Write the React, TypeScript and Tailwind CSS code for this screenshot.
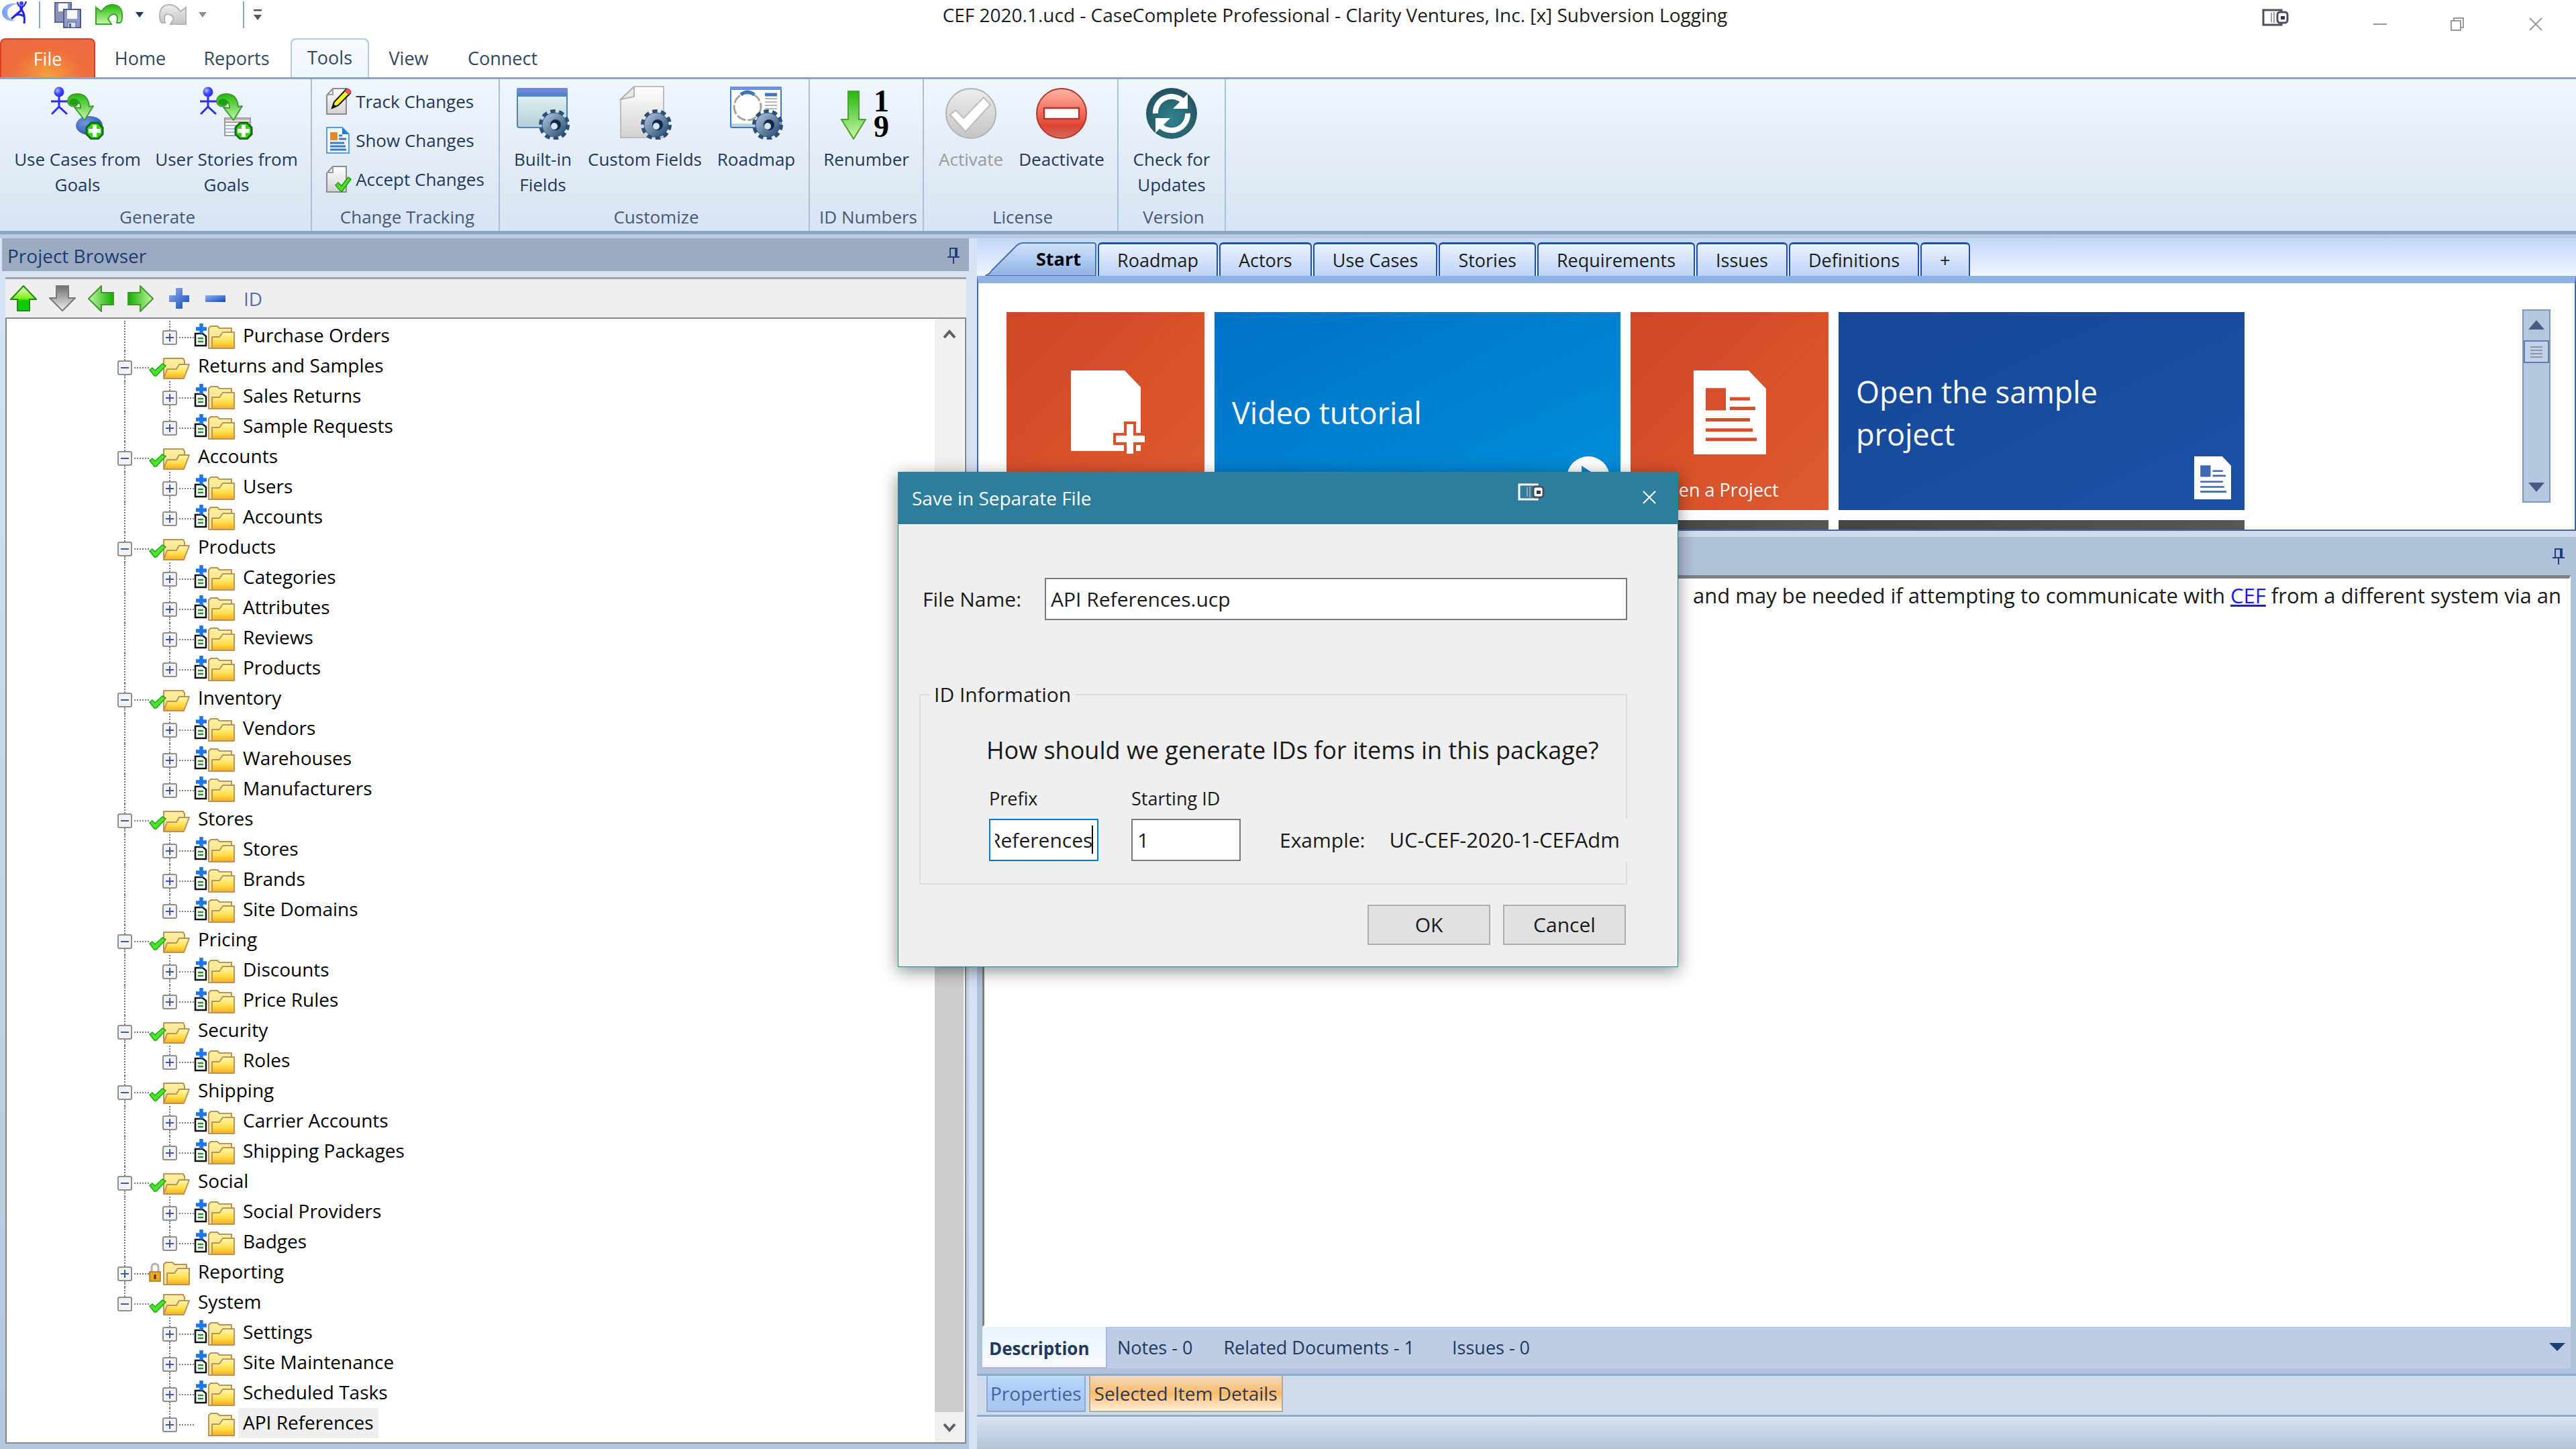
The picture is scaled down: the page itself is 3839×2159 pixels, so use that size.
import React, { useEffect, useRef, useState } from 'react';

type Status = 'doc' | 'check' | 'lock' | 'none';

interface TreeNode {
  label: string;
  level: 1 | 2;
  status: Status;
  open?: boolean;
  selected?: boolean;
}

const branch = (label: string, children: string[]): TreeNode[] => [
  { label, level: 1, status: 'check', open: true },
  ...children.map((child): TreeNode => ({ label: child, level: 2, status: 'doc' })),
];

const treeNodes: TreeNode[] = [
  { label: 'Purchase Orders', level: 2, status: 'doc' },
  ...branch('Returns and Samples', ['Sales Returns', 'Sample Requests']),
  ...branch('Accounts', ['Users', 'Accounts']),
  ...branch('Products', ['Categories', 'Attributes', 'Reviews', 'Products']),
  ...branch('Inventory', ['Vendors', 'Warehouses', 'Manufacturers']),
  ...branch('Stores', ['Stores', 'Brands', 'Site Domains']),
  ...branch('Pricing', ['Discounts', 'Price Rules']),
  ...branch('Security', ['Roles']),
  ...branch('Shipping', ['Carrier Accounts', 'Shipping Packages']),
  ...branch('Social', ['Social Providers', 'Badges']),
  { label: 'Reporting', level: 1, status: 'lock' },
  ...branch('System', ['Settings', 'Site Maintenance', 'Scheduled Tasks']),
  { label: 'API References', level: 2, status: 'none', selected: true },
];

const lastRoot = treeNodes.map((n) => n.level).lastIndexOf(1);

// Gradients shared by all of the icons
const IconDefs = () => (
  <svg width="0" height="0" className="absolute" aria-hidden="true">
    <defs>
      <linearGradient id="green" x1="0" y1="0" x2="0" y2="1">
        <stop offset="0" stopColor="#23b80d" />
        <stop offset="1" stopColor="#c9f7a9" />
      </linearGradient>
      <linearGradient id="greenUp" x1="0" y1="0" x2="0" y2="1">
        <stop offset="0" stopColor="#e6ffc8" />
        <stop offset="0.5" stopColor="#84ec1c" />
        <stop offset="0.6" stopColor="#10c800" />
        <stop offset="1" stopColor="#08d010" />
      </linearGradient>
      <linearGradient id="greenLeft" x1="0" y1="0" x2="1" y2="0">
        <stop offset="0" stopColor="#c5f7a0" />
        <stop offset="1" stopColor="#0eb000" />
      </linearGradient>
      <linearGradient id="greenRight" x1="1" y1="0" x2="0" y2="0">
        <stop offset="0" stopColor="#c5f7a0" />
        <stop offset="1" stopColor="#0eb000" />
      </linearGradient>
      <linearGradient id="grey" x1="0" y1="0" x2="0" y2="1">
        <stop offset="0" stopColor="#6e6e6e" />
        <stop offset="1" stopColor="#efefef" />
      </linearGradient>
      <linearGradient id="page" x1="0" y1="0" x2="0" y2="1">
        <stop offset="0" stopColor="#ffffff" />
        <stop offset="1" stopColor="#d2d2d2" />
      </linearGradient>
      <linearGradient id="folder" x1="0" y1="0" x2="0" y2="1">
        <stop offset="0" stopColor="#fff9b4" />
        <stop offset="0.6" stopColor="#ffdb45" />
        <stop offset="1" stopColor="#fbab22" />
      </linearGradient>
      <linearGradient id="folderBack" x1="0" y1="0" x2="0" y2="1">
        <stop offset="0" stopColor="#fdf0a0" />
        <stop offset="1" stopColor="#f5dc84" />
      </linearGradient>
      <linearGradient id="blue" x1="0" y1="0" x2="1" y2="1">
        <stop offset="0" stopColor="#8fb2ec" />
        <stop offset="1" stopColor="#1649bd" />
      </linearGradient>
      <linearGradient id="window" x1="0" y1="0" x2="0" y2="1">
        <stop offset="0" stopColor="#e9f8f8" />
        <stop offset="1" stopColor="#b4ced5" />
      </linearGradient>
      <linearGradient id="red" x1="0" y1="0" x2="0" y2="1">
        <stop offset="0" stopColor="#ffb4a8" />
        <stop offset="0.5" stopColor="#f06a58" />
        <stop offset="0.75" stopColor="#de4532" />
        <stop offset="1" stopColor="#cf6a5e" />
      </linearGradient>
      <linearGradient id="disc" x1="0" y1="0" x2="0" y2="1">
        <stop offset="0" stopColor="#ededed" />
        <stop offset="1" stopColor="#c4c4c4" />
      </linearGradient>
      <linearGradient id="swoosh" x1="0" y1="0" x2="1" y2="0">
        <stop offset="0" stopColor="#6f9df2" />
        <stop offset="1" stopColor="#b4cdfa" />
      </linearGradient>
      <radialGradient id="teal" cx="0.5" cy="0.6" r="0.6">
        <stop offset="0" stopColor="#2f8490" />
        <stop offset="1" stopColor="#24505f" />
      </radialGradient>
      <radialGradient id="ball" cx="0.35" cy="0.35" r="0.75">
        <stop offset="0" stopColor="#7396e0" />
        <stop offset="1" stopColor="#2450b8" />
      </radialGradient>
      <radialGradient id="head" cx="0.35" cy="0.35" r="0.75">
        <stop offset="0" stopColor="#b0b8ff" />
        <stop offset="0.5" stopColor="#3b44ff" />
        <stop offset="1" stopColor="#2a2df5" />
      </radialGradient>
      <linearGradient id="gear" x1="0" y1="0" x2="1" y2="1">
        <stop offset="0" stopColor="#b5cbe2" />
        <stop offset="1" stopColor="#23456e" />
      </linearGradient>
      <linearGradient id="startTab" x1="0" y1="0" x2="0" y2="1">
        <stop offset="0" stopColor="#d2e3f8" />
        <stop offset="1" stopColor="#8fb2e6" />
      </linearGradient>
    </defs>
  </svg>
);

const Gear = () => (
  <g>
    <circle cx="57" cy="58" r="19" fill="none" stroke="#2c4f79" strokeWidth="8" strokeDasharray="7 4.94" />
    <circle cx="57" cy="58" r="18" fill="url(#gear)" stroke="#2f527c" strokeWidth="1" />
    <circle cx="59" cy="58" r="8" fill="#10294a" />
    <circle cx="57" cy="60" r="5" fill="#d5e2f0" />
  </g>
);

const Figure = () => (
  <g stroke="#2a2df5" strokeWidth="3" fill="none">
    <path d="M12 16v15M0 23h25M12 31L1 42M12 31l12 11" />
    <circle cx="12" cy="9" r="7.500" fill="url(#head)" stroke="none" />
  </g>
);

const CurvedArrow = () => (
  <g strokeLinejoin="round">
    <path
      d="M25 24C25 15 32 12 39 12C50 12 56 19 57 31L63 30L50 51L35 32L44 33C44 27 43 25 41 24C40 32 27 33 25 24Z"
      fill="url(#green)" stroke="#3f9a33" strokeWidth="2"
    />
    <ellipse cx="34" cy="24" rx="7" ry="5" fill="#1f9f12" />
  </g>
);

const AddBadge = () => (
  <g>
    <path d="M60 55h10l7 7v10l-7 7H60l-7-7V62z" fill="#35d60c" stroke="#0c6c1a" strokeWidth="3" />
    <path d="M65 58v18M56 67h18" stroke="#fff" strokeWidth="6" />
  </g>
);

const BigIcon = ({ children }: { children: React.ReactNode }) => (
  <svg viewBox="0 0 80 80" className="size-20 shrink-0" aria-hidden="true">{children}</svg>
);

const UseCasesIcon = () => (
  <BigIcon>
    <ellipse cx="57" cy="59" rx="20" ry="14" fill="url(#ball)" />
    <Figure /><CurvedArrow /><AddBadge />
  </BigIcon>
);

const StoriesIcon = () => (
  <BigIcon>
    <rect x="37" y="48" width="38" height="26" fill="#fff" stroke="#9c9c9c" strokeWidth="2" />
    <path d="M38 50h36" stroke="#bbb" strokeWidth="3" />
    <path d="M38 54h36" stroke="#b5635c" strokeWidth="1.500" />
    <path d="M38 59h30M38 64h30M38 69h30" stroke="#7ea2e0" strokeWidth="1.500" />
    <Figure /><CurvedArrow /><AddBadge />
  </BigIcon>
);

const BuiltInIcon = () => (
  <BigIcon>
    <rect x="2" y="4" width="74" height="58" rx="3" fill="url(#window)" stroke="#4f84ae" strokeWidth="2" />
    <path d="M1 16V6q0-3 3-3h70q3 0 3 3v10z" fill="#4f86c4" />
    <path d="M1 10V6q0-3 3-3h70q3 0 3 3v4z" fill="#6b85e0" />
    <Gear />
  </BigIcon>
);

const CustomFieldsIcon = () => (
  <BigIcon>
    <path d="M24 1h44v76H4V20z" fill="url(#page)" stroke="#bcbcbc" strokeWidth="2" />
    <path d="M24 1v15L4 20z" fill="#e8e8e8" stroke="#b5b5b5" strokeWidth="2" />
    <Gear />
  </BigIcon>
);

const RoadmapIcon = () => (
  <BigIcon>
    <rect x="2" y="2" width="75" height="60" rx="2" fill="#fff" stroke="#4379bd" strokeWidth="2" />
    <path d="M1 1h77v5H1z" fill="#6d8fe4" />
    <path d="M3 56h73v5H3z" fill="#bdd4dc" />
    <circle cx="27" cy="31" r="20" fill="none" stroke="#a5a5a5" strokeWidth="3" strokeDasharray="14 3" />
    <path d="M17 13q10-8 20 0" fill="none" stroke="#3f74ac" strokeWidth="5" />
    <path d="M53 13h18" stroke="#4178b4" strokeWidth="5" />
    <path d="M53 19h18M53 24h18M53 29h18M53 34h18" stroke="#b9b9b9" strokeWidth="2" />
    <Gear />
  </BigIcon>
);

const RenumberIcon = () => (
  <span className="flex h-20 w-20 items-start justify-between">
    <svg viewBox="0 0 40 80" className="h-20 w-10" aria-hidden="true">
      <path d="M13 8h16v42h10L21 79L3 50h10z" fill="url(#green)" stroke="#4e9f2c" strokeWidth="2" />
    </svg>
    <span className="flex flex-col pt-1 pr-[6px] font-['Liberation_Serif',serif] text-[46px] leading-[38px] font-bold text-black">
      <span>1</span>
      <span>9</span>
    </span>
  </span>
);

const ActivateIcon = () => (
  <BigIcon>
    <circle cx="40" cy="41" r="37" fill="url(#disc)" stroke="#b4b4b4" strokeWidth="2" />
    <path d="M9 43l8-7l12 12L59 17l10 11L32 68z" fill="#fff" stroke="#bcbcbc" strokeWidth="2" />
  </BigIcon>
);

const DeactivateIcon = () => (
  <BigIcon>
    <circle cx="40" cy="41" r="37" fill="url(#red)" stroke="#b0392c" strokeWidth="2" />
    <rect x="14" y="33" width="52" height="16" fill="#fff" stroke="#a93a30" strokeWidth="2.500" />
  </BigIcon>
);

const UpdatesIcon = () => (
  <BigIcon>
    <circle cx="40" cy="41" r="38" fill="url(#teal)" />
    <path d="M16 41A24 24 0 0 1 56 22" fill="none" stroke="#fff" strokeWidth="8" />
    <path d="M64 12v22H42z" fill="#fff" />
    <path d="M64 41A24 24 0 0 1 24 60" fill="none" stroke="#fff" strokeWidth="8" />
    <path d="M16 70V48h22z" fill="#fff" />
  </BigIcon>
);

const SmallPage = ({ children }: { children: React.ReactNode }) => (
  <svg viewBox="0 0 38 42" className="h-[42px] w-[38px] shrink-0" aria-hidden="true">
    <path d="M10 2h20v38H1V12z" fill="url(#page)" stroke="#8b8b8b" strokeWidth="2" />
    <path d="M10 2v9H1" fill="none" stroke="#9b9b9b" strokeWidth="2" />
    {children}
  </svg>
);

const TrackIcon = () => (
  <SmallPage>
    <path d="M12 22L30 3l6 6L18 27l-9 4z" fill="#fff21f" stroke="#111" strokeWidth="2" />
    <path d="M28 5l3-3q6 1 6 6l-3 3z" fill="#e85d6b" stroke="#8e1c2a" />
    <path d="M8 32l3-7l5 4z" fill="#111" />
  </SmallPage>
);

const ShowIcon = () => (
  <svg viewBox="0 0 38 42" className="h-[42px] w-[38px] shrink-0" aria-hidden="true">
    <path d="M1 2h23l10 10v28H1z" fill="#f2f8ff" stroke="#4f9bf0" strokeWidth="2" />
    <path d="M24 2l10 10H24z" fill="#1e7be6" />
    <rect x="6" y="9" width="11" height="12" fill="#e08a2c" />
    <path d="M19 14h5M19 19h11M6 25h21M6 30h23M6 35h24" stroke="#3c78bf" strokeWidth="3" />
  </svg>
);

const AcceptIcon = () => (
  <SmallPage>
    <path d="M14 30l4-4l5 5l10-13l4 3l-14 19z" fill="#4fe02c" stroke="#1f9a14" strokeWidth="1.500" />
  </SmallPage>
);

interface RibbonButtonProps {
  icon: React.ReactNode;
  lines: string[];
  className: string;
  disabled?: boolean;
}

const RibbonButton = ({ icon, lines, className, disabled }: RibbonButtonProps) => (
  <button
    disabled={disabled}
    className={`flex flex-col items-center gap-[10px] leading-[38px] whitespace-nowrap ${disabled ? 'text-[#9a9a9a]' : ''} ${className}`}
  >
    {icon}
    <span>
      {lines.map((line) => <span key={line} className="block">{line}</span>)}
    </span>
  </button>
);

const RibbonGroup = ({ title, className, children }: { title: string; className: string; children: React.ReactNode }) => (
  <section className={`flex flex-col justify-between border-r-2 border-[#a9bfda] pt-[10px] pb-[2px] ${className}`}>
    <div className="flex justify-center">{children}</div>
    <h2 className="pl-[6px] text-center leading-[38px] whitespace-nowrap text-[#47597a]">{title}</h2>
  </section>
);

const Ribbon = () => (
  <div className="flex h-[234px] items-stretch border-t-[3px] border-b-[5px] border-t-[#8ba5c4] border-b-[#8ba5c4] bg-linear-to-b from-[#eff6fe] via-[#e4ecf7] to-[#d7e4f2] text-[26px] text-[#1e395b]">
    <RibbonGroup title="Generate" className="w-[465px]">
      <div className="flex pr-[10px]">
        <RibbonButton className="w-[222px]" icon={<UseCasesIcon />} lines={['Use Cases from', 'Goals']} />
        <RibbonButton className="w-[222px]" icon={<StoriesIcon />} lines={['User Stories from', 'Goals']} />
      </div>
    </RibbonGroup>
    <RibbonGroup title="Change Tracking" className="w-[280px]">
      <div className="flex flex-col gap-4 pt-[2px]">
        {[
          { label: 'Track Changes', icon: <TrackIcon /> },
          { label: 'Show Changes', icon: <ShowIcon /> },
          { label: 'Accept Changes', icon: <AcceptIcon /> },
        ].map((item) => (
          <button key={item.label} className="flex h-[42px] items-center gap-[6px] whitespace-nowrap">
            {item.icon}
            {item.label}
          </button>
        ))}
      </div>
    </RibbonGroup>
    <RibbonGroup title="Customize" className="w-[462px]">
      <RibbonButton className="w-[108px]" icon={<BuiltInIcon />} lines={['Built-in', 'Fields']} />
      <RibbonButton className="w-[196px]" icon={<CustomFieldsIcon />} lines={['Custom Fields']} />
      <RibbonButton className="w-[136px]" icon={<RoadmapIcon />} lines={['Roadmap']} />
    </RibbonGroup>
    <RibbonGroup title="ID Numbers" className="w-[170px]">
      <RibbonButton className="w-[150px]" icon={<RenumberIcon />} lines={['Renumber']} />
    </RibbonGroup>
    <RibbonGroup title="License" className="w-[290px]">
      <RibbonButton className="w-[122px]" icon={<ActivateIcon />} lines={['Activate']} disabled />
      <RibbonButton className="w-[148px]" icon={<DeactivateIcon />} lines={['Deactivate']} />
    </RibbonGroup>
    <RibbonGroup title="Version" className="w-[160px]">
      <RibbonButton className="w-[140px]" icon={<UpdatesIcon />} lines={['Check for', 'Updates']} />
    </RibbonGroup>
  </div>
);

const CaptureIcon = ({ className }: { className: string }) => (
  <svg viewBox="0 0 40 28" className={`h-7 w-10 ${className}`} aria-hidden="true">
    <rect x="2" y="3" width="27" height="22" fill="none" stroke="currentColor" strokeWidth="3" />
    <path d="M14 7v14M18 6v16" stroke="#9aa0ac" strokeWidth="2" />
    <rect x="23" y="6" width="15" height="16" rx="4" fill="#fff" stroke="#4a4f63" strokeWidth="3" />
    <rect x="28" y="12" width="6" height="5" fill="#30364c" />
  </svg>
);

const undoPath = 'M1 5L9 11Q17 0 27 1Q41 3 40 19Q40 26 37 28H32Q35 17 29 15Q22 15 19 22L24 30H1z';

const TitleBar = () => (
  <header className="grid h-[57px] grid-cols-[1fr_auto_1fr] items-start">
    <div className="flex h-11 items-center">
      <svg viewBox="0 0 42 40" className="ml-[2px] h-10 w-[42px]" aria-hidden="true">
        <path d="M25 3C10 1 1 8 1 17C2 26 11 31 21 29C13 27 8 22 9 15C10 9 16 6 25 3Z" fill="url(#swoosh)" />
        <circle cx="30" cy="3" r="3" fill="#3b3bff" />
        <path d="M24 1q1 7 6 7q5 0 7-8" fill="none" stroke="#3434f4" strokeWidth="2.500" />
        <path d="M27 7h6l-2 8h-3z" fill="#2424f0" />
        <path d="M30 12q6 8 4 21M30 13L15 26M20 21q8-3 13 1" fill="none" stroke="#2424f0" strokeWidth="3" />
      </svg>
      <span className="ml-[14px] h-10 w-[2px] bg-[#8aa7c8]" />
      <button aria-label="Save all" className="ml-5">
        <svg viewBox="0 0 42 42" className="size-[42px]">
          <rect x="2" y="3" width="24" height="29" fill="#8793bd" stroke="#5a6796" strokeWidth="2" />
          <rect x="7" y="4" width="14" height="12" fill="#fff" />
          <rect x="15" y="13" width="25" height="27" fill="#8f9bc6" stroke="#4f5c8c" strokeWidth="2" />
          <rect x="20" y="14" width="15" height="13" fill="#f6f8ff" />
          <rect x="21" y="32" width="12" height="8" fill="#dde2f2" stroke="#4f5c8c" />
          <rect x="23" y="34" width="3" height="6" fill="#4f5c8c" />
        </svg>
      </button>
      <button aria-label="Undo" className="ml-5">
        <svg viewBox="0 0 42 32" className="h-8 w-[42px]">
          <path d={undoPath} fill="url(#green)" stroke="#3aa52c" strokeWidth="2" />
        </svg>
      </button>
      <svg viewBox="0 0 12 8" className="ml-[18px] h-2 w-3" aria-hidden="true"><path d="M0 0h12L6 8z" fill="#1e395b" /></svg>
      <button aria-label="Redo" disabled className="ml-[22px]">
        <svg viewBox="0 0 42 32" className="h-8 w-[42px]">
          <g transform="matrix(-1 0 0 1 42 0)">
            <path d={undoPath} fill="url(#disc)" stroke="#b5b5b5" strokeWidth="2" />
          </g>
        </svg>
      </button>
      <svg viewBox="0 0 12 8" className="ml-[18px] h-2 w-3" aria-hidden="true"><path d="M0 0h12L6 8z" fill="#8f8f8f" /></svg>
      <span className="ml-[54px] h-10 w-[2px] bg-[#8aa7c8]" />
      <svg viewBox="0 0 12 16" className="ml-[14px] h-4 w-3" aria-hidden="true">
        <path d="M0 1h12" stroke="#555" strokeWidth="3" /><path d="M0 8h12l-6 8z" fill="#555" />
      </svg>
    </div>
    <h1 className="pl-[140px] text-[28px] leading-[44px] whitespace-nowrap text-[#1d1d1d]">
      CEF 2020.1.ucd - CaseComplete Professional - Clarity Ventures, Inc. [x] Subversion Logging
    </h1>
    <div className="flex items-start justify-end pr-[50px] text-[#999]">
      <CaptureIcon className="mt-3 mr-[126px] text-[#4a4f63]" />
      <button aria-label="Minimize" className="mt-[26px] mr-[95px]">
        <svg viewBox="0 0 20 20" className="size-5"><path d="M0 10h20" stroke="currentColor" strokeWidth="2" /></svg>
      </button>
      <button aria-label="Restore" className="mt-[26px] mr-[97px]">
        <svg viewBox="0 0 20 20" className="size-5" fill="none" stroke="currentColor" strokeWidth="2">
          <path d="M1 5h14v14H1zM5 5V1h14v14h-4" />
        </svg>
      </button>
      <button aria-label="Close" className="mt-[26px]">
        <svg viewBox="0 0 20 20" className="size-5"><path d="M1 1l18 18M19 1L1 19" stroke="currentColor" strokeWidth="2" /></svg>
      </button>
    </div>
  </header>
);

const ribbonTab = 'flex h-full items-center justify-center pt-[2px]';

const RibbonTabs = () => (
  <nav className="flex h-[58px] items-stretch text-[27px] text-[#34475f]">
    <button className={`${ribbonTab} w-[142px] rounded-t-lg border-2 border-b-0 border-[#d8431f] bg-[radial-gradient(ellipse_at_bottom,#f6a03c_0%,#ee6d3c_55%,#ee6a48_100%)] text-white`}>File</button>
    <button className={`${ribbonTab} w-[134px]`}>Home</button>
    <button className={`${ribbonTab} w-[153px]`}>Reports</button>
    <button className={`${ribbonTab} relative -mb-[3px] ml-1 h-[61px] w-[117px] rounded-t-lg border-2 border-b-0 border-[#b6cbe3] bg-linear-to-b from-[#f6faff] to-[#eff6fe] pb-[3px]`}>Tools</button>
    <button className={`${ribbonTab} w-[118px]`}>View</button>
    <button className={`${ribbonTab} w-[162px]`}>Connect</button>
  </nav>
);

const ExpandBox = ({ open }: { open?: boolean }) => (
  <svg viewBox="0 0 22 22" className="size-[22px] shrink-0" aria-hidden="true">
    <rect x="1" y="1" width="20" height="20" rx="2" fill="#f2f2f2" stroke="#8f8f8f" strokeWidth="2" />
    <path d={open ? 'M5 11h12' : 'M5 11h12M11 5v12'} stroke="#3c57a8" strokeWidth="2" />
  </svg>
);

// Status mark and folder, drawn together because they overlap
const NodeIcon = ({ status, open }: { status: Status; open?: boolean }) => (
  <svg viewBox="0 0 62 45" className="h-[45px] w-[62px] shrink-0" aria-hidden="true">
    {open ? (
      <g stroke="#b8935a" strokeWidth="2" strokeLinejoin="round">
        <path d="M22 41V11h29l2 4v12L46 41z" fill="url(#folderBack)" />
        <path d="M22 41L27 27h14l4-7h15l-8 21z" fill="url(#folder)" />
      </g>
    ) : (
      <g stroke="#b8935a" strokeWidth="2" strokeLinejoin="round">
        <path d="M22 41V11l3-3h10l3 3h18v30z" fill="url(#folderBack)" />
        <path d="M27 41V24h11l5-7h17v24z" fill="url(#folder)" />
      </g>
    )}
    {status === 'check' && <path d="M1 28l4-3l4 4l11-10l5 3L11 37H8z" fill="#4be629" stroke="#22a512" strokeWidth="1.500" />}
    {status === 'lock' && (
      <g>
        <path d="M4 24v-8q0-6 5-6t5 6v8" fill="none" stroke="#b2b2b2" strokeWidth="3" />
        <rect x="1" y="22" width="16" height="14" fill="#eda91e" stroke="#9d7420" strokeWidth="1.500" />
        <path d="M9 26v7" stroke="#4b3208" strokeWidth="3" />
      </g>
    )}
    {status === 'doc' && (
      <g>
        <path d="M8 19h5l5 4v14H2V19z" fill="#fff" stroke="#111" strokeWidth="2.500" />
        <path d="M6 26h8M6 31h8" stroke="#249324" strokeWidth="2.500" />
        <path d="M11 4v15M3 12h16" stroke="#1f75ee" strokeWidth="5.500" />
      </g>
    )}
  </svg>
);

const VLine = ({ className }: { className: string }) => (
  <span className={`w-0 border-l-2 border-dotted border-[#7c7c7c] ${className}`} />
);

const TreeRow = ({ node, index }: { node: TreeNode; index: number }) => {
  const next = treeNodes[index + 1];
  const endsTrunk = !next || index === lastRoot || (node.level === 2 && next.level === 1);
  return (
    <li className="flex h-[45px] items-stretch">
      {node.level === 2 && (
        <span className="mr-[45px] flex w-[22px] justify-center">
          {index < lastRoot && <VLine className="h-full" />}
        </span>
      )}
      <button aria-label={`Toggle ${node.label}`} className="flex w-[22px] flex-col items-center">
        <VLine className="h-[14px]" />
        <ExpandBox open={node.open} />
        {endsTrunk ? <span className="h-[9px]" /> : <VLine className="h-[9px]" />}
      </button>
      <span className="mt-6 ml-[3px] h-0 w-[22px] border-t-2 border-dotted border-[#7c7c7c]" />
      <NodeIcon status={node.status} open={node.open} />
      <span className={`ml-1 px-[7px] leading-[43px] whitespace-nowrap ${node.selected ? 'bg-[#efefef]' : ''}`}>{node.label}</span>
    </li>
  );
};

const PinIcon = () => (
  <svg viewBox="0 0 18 26" className="h-[26px] w-[18px]" fill="none" stroke="#1f3f80" strokeWidth="2" aria-hidden="true">
    <path d="M4 14V2h10v12M12 2v12M0 15h18M9 15v10" />
  </svg>
);

const ProjectBrowser = () => (
  <aside className="flex min-w-0 flex-col bg-linear-to-b from-[#d6e5f5] to-[#b4c6dc] pb-2">
    <div className="ml-[3px] flex h-[49px] items-center justify-between bg-[#9bacc2] pt-[2px] pr-[14px] pl-2 text-[28px] text-[#1f3b70]">
      <h2>Project Browser</h2>
      <button aria-label="Pin project browser"><PinIcon /></button>
    </div>
    <div className="mt-[9px] mr-1 ml-2 flex h-[60px] items-center gap-[18px] border-t-[3px] border-[#a3a3a3] bg-[#efefef] pl-[7px]">
      <button aria-label="Move up">
        <svg viewBox="0 0 40 40" className="size-10"><path d="M20 1l19 20H29v17H11V21H1z" fill="url(#greenUp)" stroke="#1f8a10" strokeWidth="2" /></svg>
      </button>
      <button aria-label="Move down">
        <svg viewBox="0 0 40 40" className="size-10"><path d="M20 38L1 19h10V1h18v18h10z" fill="url(#grey)" stroke="#7a7a7a" strokeWidth="2" /></svg>
      </button>
      <button aria-label="Promote">
        <svg viewBox="0 0 40 40" className="size-10"><path d="M1 20L20 1v10h18v18H20v10z" fill="url(#greenLeft)" stroke="#469433" strokeWidth="2" /></svg>
      </button>
      <button aria-label="Demote">
        <svg viewBox="0 0 40 40" className="size-10"><path d="M39 20L20 1v10H2v18h18v10z" fill="url(#greenRight)" stroke="#469433" strokeWidth="2" /></svg>
      </button>
      <button aria-label="Add" className="ml-1">
        <svg viewBox="0 0 32 32" className="size-8"><path d="M11 0h10v11h10v10H21v10H11V21H1V11h10z" fill="url(#blue)" /></svg>
      </button>
      <button aria-label="Remove" className="ml-1">
        <svg viewBox="0 0 32 32" className="size-8"><path d="M1 11h30v10H1z" fill="url(#blue)" /></svg>
      </button>
      <button className="ml-2 text-[28px] text-[#4f6fb8]">ID</button>
    </div>
    <div className="mr-[4px] ml-2 flex flex-1 justify-between border-2 border-[#828790] bg-white pr-[2px]">
      <ul className="pt-[3px] pl-[165px] text-[28px] text-black">
        {treeNodes.map((node, i) => <TreeRow key={i} node={node} index={i} />)}
      </ul>
      <div className="flex w-[43px] flex-col items-center bg-[#f0f0f0]">
        <button aria-label="Scroll up" className="flex h-[45px] items-center">
          <svg viewBox="0 0 20 14" className="h-[14px] w-5"><path d="M2 12l8-9l8 9" fill="none" stroke="#606060" strokeWidth="4" /></svg>
        </button>
        <div className="w-full flex-1" />
        <div className="w-full flex-[2] bg-[#cdcdcd]" />
        <button aria-label="Scroll down" className="flex h-[45px] items-center">
          <svg viewBox="0 0 20 14" className="h-[14px] w-5"><path d="M2 2l8 9l8-9" fill="none" stroke="#606060" strokeWidth="4" /></svg>
        </button>
      </div>
    </div>
  </aside>
);

const documentTabs = ['Roadmap', 'Actors', 'Use Cases', 'Stories', 'Requirements', 'Issues', 'Definitions', '+'];

const DocumentTabs = () => (
  <nav className="flex h-14 items-end gap-[2px] bg-linear-to-b from-[#c2d7f8] to-[#f0f6fe] pl-3 text-[27px] text-[#1c1c1c]">
    <button className="relative h-[50px] w-[166px] pl-[76px] text-left font-bold text-black">
      <svg viewBox="0 0 166 50" preserveAspectRatio="none" className="absolute inset-0 size-full" aria-hidden="true">
        <path d="M0 50Q6 48 10 42L44 8Q50 1 56 1H162q3 0 3 4V50z" fill="url(#startTab)" stroke="#4a70ae" strokeWidth="2" />
      </svg>
      <span className="relative">Start</span>
    </button>
    {documentTabs.map((tab) => (
      <button key={tab} className="h-[50px] rounded-t-md border-2 border-t-[3px] border-b-0 border-[#1f4fae] bg-linear-to-b from-[#eaf2fd] to-[#bdd3f6] px-[27px] pt-px whitespace-nowrap">
        {tab}
      </button>
    ))}
  </nav>
);

const SheetIcon = ({ className }: { className: string }) => (
  <svg viewBox="0 0 108 124" preserveAspectRatio="none" className={className} aria-hidden="true">
    <path d="M0 0h82l26 27v97H0z" fill="#fff" />
    <path d="M18 26h30v33H18z" fill="currentColor" />
    <path d="M54 42h30M54 56h38M18 73h66M18 88h70M18 102h76" stroke="currentColor" strokeWidth="5" />
  </svg>
);

const tile = 'relative h-[295px] shrink-0 text-left text-white';
const orange = 'bg-linear-to-br from-[#d14624] to-[#de5b31]';

const StartPage = () => (
  <div className="flex h-[380px] items-start justify-between overflow-hidden border-2 border-t-[11px] border-[#4066a4] border-t-[#8fb2e6] bg-white pr-9 pl-[42px]">
    <div className="grid grid-cols-[295px_605px_295px_605px] gap-[15px] pt-[43px]">
      <button aria-label="New project" className={`${tile} ${orange}`}>
        <svg viewBox="0 0 112 130" className="absolute top-[87px] left-[96px] h-[130px] w-28">
          <path d="M0 0h80l24 25v95H0z" fill="#fff" />
          <path d="M81 78h14v17h17v14H95v17H81v-17H65V95h16z" fill="#fff" stroke="#d9522c" strokeWidth="4" />
        </svg>
      </button>
      <button className={`${tile} bg-linear-to-br from-[#0072c6] to-[#008fd8] pt-1 pl-[26px] text-[45px] leading-[63px]`}>
        Video tutorial
        <svg viewBox="0 0 64 64" className="absolute right-4 bottom-4 size-16" aria-hidden="true">
          <circle cx="32" cy="32" r="32" fill="#fff" /><path d="M22 14l28 18l-28 18z" fill="#0084d0" />
        </svg>
      </button>
      <button className={`${tile} ${orange} flex flex-col items-center pt-[87px] text-[27px]`}>
        <SheetIcon className="h-[125px] w-[108px] text-[#d84f2b]" />
        <span className="mt-[33px] mr-10">Open a Project</span>
      </button>
      <button className={`${tile} bg-linear-to-br from-[#174798] to-[#1a51a5] pt-1 pl-[26px] text-[45px] leading-[63px]`}>
        Open the sample<br />project
        <SheetIcon className="absolute right-5 bottom-4 h-16 w-[55px] text-[#3f68b0]" />
      </button>
      {[0, 1, 2, 3].map((i) => (
        <div key={i} className="h-[295px] bg-linear-to-br from-[#444444] to-[#6a6a6a]" />
      ))}
    </div>
    <div className="mt-[39px] flex h-[288px] w-[42px] shrink-0 flex-col items-center border-2 border-[#7d97bd] bg-[#b4c7df] py-[14px]">
      <svg viewBox="0 0 24 14" className="h-[14px] w-6" aria-hidden="true"><path d="M0 14L12 0l12 14z" fill="#4b5a80" /></svg>
      <div className="mt-4 flex h-[34px] w-full flex-col justify-center gap-[3px] border-2 border-[#5f80ab] bg-[#bfd2ea] px-2">
        {[0, 1, 2, 3].map((i) => <span key={i} className="h-[2px] bg-[#8d99aa]" />)}
      </div>
      <svg viewBox="0 0 24 14" className="mt-auto h-[14px] w-6" aria-hidden="true"><path d="M0 0L12 14L24 0z" fill="#4b5a80" /></svg>
    </div>
  </div>
);

const DetailsPane = () => (
  <section className="flex flex-1 flex-col border-t-[9px] border-[#cfdcec] bg-[#b0c2da] pr-2 pl-2">
    <div className="flex h-[57px] items-center justify-end pr-[9px]">
      <button aria-label="Pin details"><PinIcon /></button>
    </div>
    <div className="flex-1 border-t-[5px] border-r-2 border-b-[3px] border-l-[3px] border-[#808080] border-r-white border-b-white bg-white pt-[2px] pr-3 text-right text-[31px] leading-[46px] whitespace-nowrap text-[#1a1a1a]">
      and may be needed if attempting to communicate with <a href="#cef" className="text-[#1a1aee] underline">CEF</a> from a different system via an
    </div>
    <div className="flex h-[62px] items-stretch bg-[#bccde5] text-[27px] text-[#1e395b]">
      <button className="w-[186px] border-r-2 border-b-2 border-[#a7bbd6] bg-linear-to-b from-[#e9f3fe] to-[#f7fbff] pt-1 pl-[10px] text-left text-[26px] font-bold">Description</button>
      <button className="ml-[15px]">Notes - 0</button>
      <button className="ml-[46px]">Related Documents - 1</button>
      <button className="ml-[56px]">Issues - 0</button>
      <svg viewBox="0 0 24 12" className="mt-6 mr-2 ml-auto h-3 w-6" aria-hidden="true"><path d="M0 0h24L12 12z" fill="#1e3f72" /></svg>
    </div>
    <div className="-mx-2 mt-2 flex h-[64px] items-start gap-[5px] border-y-[3px] border-[#8fa9c9] bg-[#cfdcec] pl-[14px] text-[28px]">
      <button className="h-[54px] border-2 border-t-0 border-[#8faad2] bg-linear-to-b from-[#bcd8fc] via-[#abcbf7] to-[#a9c5ec] px-1 text-[#46639a]">Properties</button>
      <button className="h-[54px] border-2 border-t-0 border-[#b9a88f] bg-linear-to-b from-[#f3d9bd] via-[#fcba66] to-[#fff1dc] px-[6px] text-[#2a3a55]">Selected Item Details</button>
    </div>
    <div className="-mx-2 h-[48px] bg-linear-to-b from-[#d7e3f2] to-[#b2c4d9]" />
  </section>
);

const field = 'h-[63px] border-2 bg-white px-[7px] text-[30px] text-[#1a1a1a] outline-none';

const SaveDialog = () => {
  const [fileName, setFileName] = useState('API References.ucp');
  const [prefix, setPrefix] = useState('References');
  const [startingId, setStartingId] = useState('1');
  const prefixRef = useRef<HTMLInputElement>(null);

  // Keep the end of a long prefix in view
  useEffect(() => {
    if (prefixRef.current) prefixRef.current.scrollLeft = prefixRef.current.scrollWidth;
  }, [prefix]);

  return (
    <div className="absolute inset-0 flex items-center justify-center pb-4">
      <div role="dialog" aria-labelledby="dialog-title" className="w-[1163px] border border-[#2e7d9a] bg-[#efefef] text-[30px] text-[#1a1a1a] shadow-[0_6px_24px_rgba(0,0,0,0.45)]">
        <div className="flex h-[77px] items-start bg-[#2e7d9a] text-white">
          <h2 id="dialog-title" className="pl-5 text-[28px] leading-[77px]">Save in Separate File</h2>
          <CaptureIcon className="mt-[15px] mr-[146px] ml-auto" />
          <button aria-label="Close dialog" className="mt-[27px] mr-8">
            <svg viewBox="0 0 20 20" className="size-5"><path d="M1 1l18 18M19 1L1 19" stroke="currentColor" strokeWidth="2" /></svg>
          </button>
        </div>
        <div className="pt-20 pr-[75px] pb-8 pl-[31px]">
          <div className="flex items-center pl-[5px]">
            <label htmlFor="file-name" className="w-[182px]">File Name:</label>
            <input id="file-name" className={`${field} min-w-0 flex-1 border-[#7a7a7a]`} value={fileName} onChange={(e) => setFileName(e.target.value)} />
          </div>
          <fieldset className="mt-[90px] border-2 border-[#dcdcdc] pb-[33px] pl-[98px]">
            <legend className="-ml-[84px] px-[6px] leading-[42px]">ID Information</legend>
            <p className="mt-[34px] text-[36px] leading-[56px] whitespace-nowrap">How should we generate IDs for items in this package?</p>
            <div className="mt-[22px] -mr-[2px] flex items-end">
              <div className="relative mr-[49px] ml-1 flex w-[163px] flex-col">
                <label htmlFor="prefix" className="mb-2 text-[27px] leading-[44px]">Prefix</label>
                <input id="prefix" ref={prefixRef} className={`${field} border-[#0078d7]`} value={prefix} onChange={(e) => setPrefix(e.target.value)} />
                <span className="absolute right-2 bottom-[11px] h-[42px] w-[2px] bg-black" />
              </div>
              <div className="flex w-[163px] flex-col">
                <label htmlFor="starting-id" className="mb-2 text-[27px] leading-[44px] whitespace-nowrap">Starting ID</label>
                <input id="starting-id" className={`${field} border-[#7a7a7a]`} value={startingId} onChange={(e) => setStartingId(e.target.value)} />
              </div>
              <span className="ml-[58px] leading-[63px]">Example:</span>
              <output className="ml-9 flex-1 overflow-hidden bg-[#efefef] text-[31px] leading-[63px] whitespace-nowrap">UC-CEF-2020-1-CEFAdm</output>
            </div>
          </fieldset>
          <div className="mt-[30px] mr-[2px] flex justify-end gap-[19px]">
            <button className="h-[60px] w-[183px] border-2 border-[#adadad] bg-[#e1e1e1]">OK</button>
            <button className="h-[60px] w-[183px] border-2 border-[#adadad] bg-[#e1e1e1]">Cancel</button>
          </div>
        </div>
      </div>
    </div>
  );
};

export default function App() {
  return (
    <div className="relative flex min-h-screen flex-col overflow-hidden bg-white font-['Open_Sans','Noto_Sans',sans-serif]">
      <IconDefs />
      <TitleBar />
      <RibbonTabs />
      <Ribbon />
      <main className="grid flex-1 grid-cols-[1444fr_2395fr] border-t-[6px] border-[#bccbdd]">
        <ProjectBrowser />
        <div className="flex min-w-0 bg-linear-to-r from-[#d5e2f2] to-[#bccde3] pl-3">
          <div className="flex min-w-0 flex-1 flex-col">
            <DocumentTabs />
            <StartPage />
            <DetailsPane />
          </div>
        </div>
      </main>
      <SaveDialog />
    </div>
  );
}
